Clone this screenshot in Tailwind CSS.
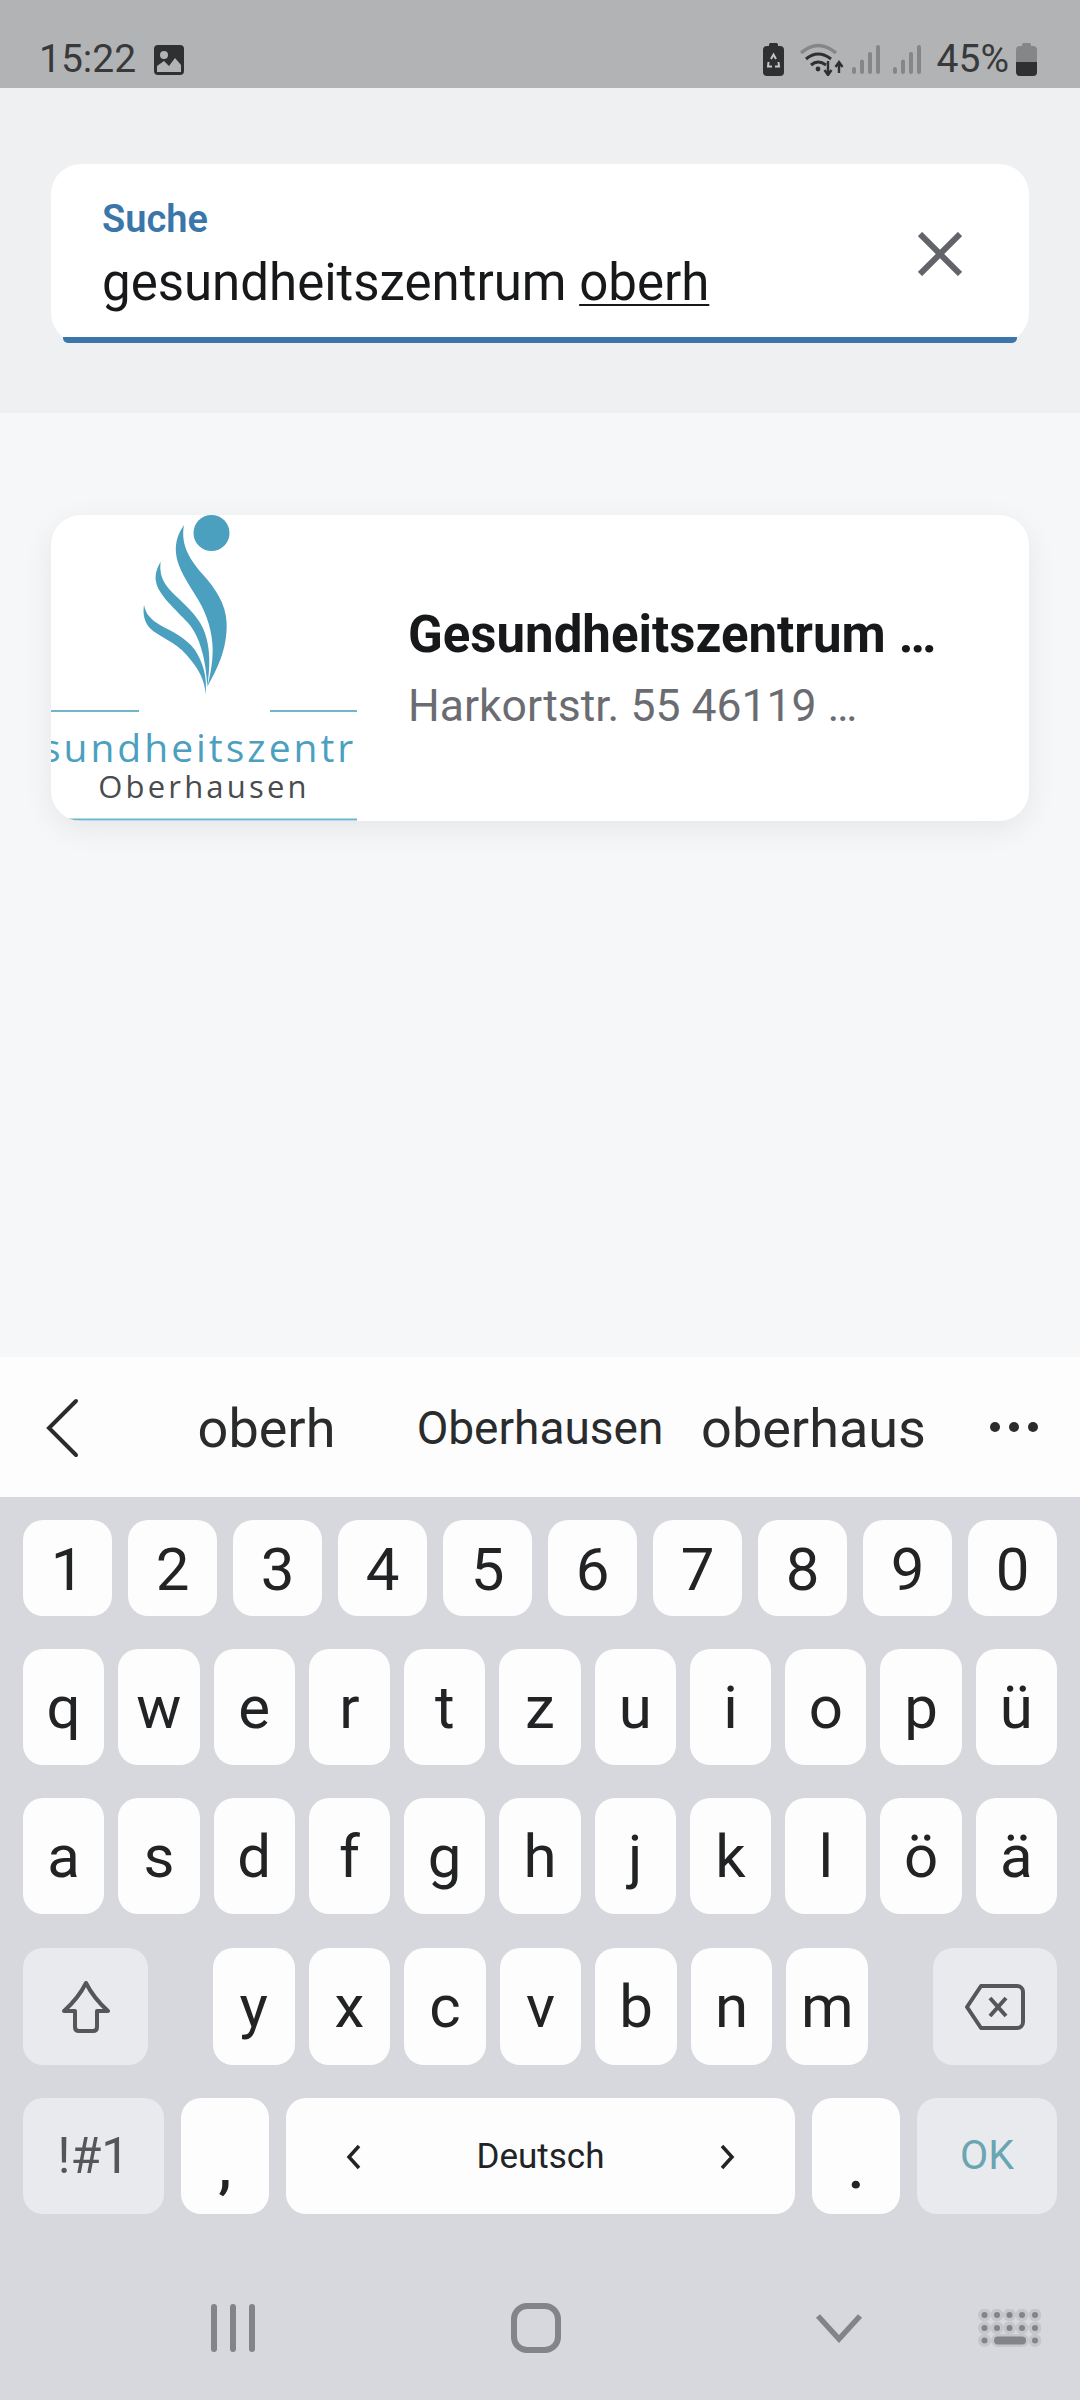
<!DOCTYPE html>
<html lang="de">
<head>
    <meta charset="UTF-8">
    <meta name="viewport" content="width=device-width, initial-scale=1.0">
    <title>Suche</title>
    <script src="https://cdn.jsdelivr.net/npm/@tailwindcss/browser@4"></script>
</head>
<body class="w-[1080px] h-[2400px] overflow-hidden flex flex-col bg-[#f6f7f9] font-['Roboto',sans-serif]">

<!-- Status bar -->
<div class="h-[88px] bg-[#b2b3b5] flex items-end pb-[8px] pl-[39px] text-[#38393b] text-[39px] leading-[42px]">
    <span>15:22</span>
    <svg class="ml-[18px] mb-[5px]" width="30" height="30" viewBox="0 0 30 30">
        <rect width="30" height="30" rx="4" fill="#2f3032"/>
        <circle cx="10" cy="10" r="4" fill="#b2b3b5"/>
        <path d="M3 27V21L10 16L15 21L21 13L27 20V27Z" fill="#b2b3b5"/>
    </svg>
    <div class="ml-auto flex items-end">
        <svg class="mb-[4px]" width="21" height="33" viewBox="0 0 21 33">
            <rect x="6" y="0" width="9" height="5" rx="1.5" fill="#2f3032"/>
            <rect x="0" y="3" width="21" height="30" rx="4" fill="#2f3032"/>
            <path d="M8 16L10.500 11.500L13 16M15.500 19L16 23.500H12M9 23.500H5L5.500 19" stroke="#c4c5c7" stroke-width="2" fill="none"/>
        </svg>
        <svg class="ml-[16px] mb-[4px]" width="44" height="33" viewBox="0 0 44 33">
            <path d="M1 10Q18 -5 36 10" stroke="#858688" stroke-width="3.5" fill="none"/>
            <path d="M6 16Q18 6 31 16" stroke="#2f3032" stroke-width="3" fill="none"/>
            <path d="M11 22Q18 16 26 22" stroke="#2f3032" stroke-width="3" fill="none"/>
            <circle cx="18" cy="26" r="2.4" fill="#2f3032"/>
            <path d="M28 18V31M24.500 27L28 32L31.500 27M39 30V20M35.500 24L39 19L42.500 24" stroke="#2f3032" stroke-width="2.400" fill="none"/>
        </svg>
        <svg class="ml-[8px] mb-[6px]" width="28" height="29" viewBox="0 0 28 29">
            <rect x="0" y="22" width="4" height="7" rx="2" fill="#858688"/>
            <rect x="8" y="14.500" width="4" height="14.500" rx="2" fill="#858688"/>
            <rect x="16" y="7" width="4" height="22" rx="2" fill="#858688"/>
            <rect x="24" y="0" width="4" height="29" rx="2" fill="#858688"/>
        </svg>
        <svg class="ml-[13px] mb-[6px]" width="28" height="29" viewBox="0 0 28 29">
            <rect x="0" y="22" width="4" height="7" rx="2" fill="#858688"/>
            <rect x="8" y="14.500" width="4" height="14.500" rx="2" fill="#858688"/>
            <rect x="16" y="7" width="4" height="22" rx="2" fill="#858688"/>
            <rect x="24" y="0" width="4" height="29" rx="2" fill="#858688"/>
        </svg>
        <span class="ml-[16px]">45%</span>
        <svg class="ml-[7px] mr-[43px] mb-[4px]" width="21" height="33" viewBox="0 0 21 33">
            <rect x="6" y="0" width="9" height="5" rx="1.5" fill="#858688"/>
            <rect x="0" y="3" width="21" height="30" rx="4" fill="#858688"/>
            <path d="M0 19H21V29A4 4 0 0 1 17 33H4A4 4 0 0 1 0 29Z" fill="#2f3032"/>
        </svg>
    </div>
</div>

<!-- Search header -->
<div class="h-[325px] bg-[#eef0f2] px-[51px] pt-[76px]">
    <div class="relative h-[179px] bg-white rounded-[30px] pl-[51px] pt-[35px]">
        <div class="text-[38px] leading-[40px] font-semibold text-[#3a76aa]">Suche</div>
        <div class="mt-[14px] text-[51px] leading-[60px] text-[#17181a]">gesundheitszentrum <span class="underline decoration-2 underline-offset-[4px]">oberh</span></div>
        <svg class="absolute right-[67px] top-[68px]" width="44" height="44" viewBox="0 0 44 44">
            <path d="M2 2L42 42M42 2L2 42" stroke="#636469" stroke-width="6" fill="none"/>
        </svg>
        <div class="absolute left-[12px] right-[12px] bottom-0 h-[6px] bg-[#3a76aa] rounded-b-[5px]"></div>
    </div>
</div>

<!-- Results -->
<div class="h-[944px] px-[51px] pt-[102px]">
    <div class="h-[306px] bg-white rounded-[30px] overflow-hidden shadow-[0_8px_30px_rgba(0,0,0,0.07)] flex items-center">
        <svg class="shrink-0" width="306" height="306" viewBox="0 0 306 306">
            <circle cx="160.500" cy="18" r="18" fill="#4ba0bf"/>
            <g transform="translate(69 -15) scale(0.3333)" fill="#4ba0bf">
                <path d="M192 75C175 100 165 125 168 160C172 205 205 250 235 300C262 345 278 400 278 450C278 490 270 530 262 560C290 510 322 450 320 370C318 310 285 265 250 225C215 185 180 140 192 75Z"/>
                <path d="M122 185C110 205 104 225 108 245C115 285 165 325 205 370C240 410 258 480 262 560C270 500 272 450 255 400C240 355 205 325 175 295C145 265 115 240 122 185Z"/>
                <path d="M72 315C68 340 72 365 90 385C115 410 165 425 200 465C235 505 255 540 257 585C262 530 250 490 225 450C195 410 155 395 120 375C95 360 78 345 72 315Z"/>
            </g>
            <path d="M0 196H88M219 196H306" stroke="#6fb6c9" stroke-width="2"/>
            <path d="M0 304.500H306" stroke="#6fb6c9" stroke-width="2"/>
            <text x="153" y="247" text-anchor="middle" font-family="Open Sans" font-size="39" font-weight="500" letter-spacing="3" fill="#4ba0bf">Gesundheitszentrum</text>
            <text x="153" y="283" text-anchor="middle" font-family="Open Sans" font-size="31" letter-spacing="3.200" fill="#4a4b4e">Oberhausen</text>
        </svg>
        <div class="pl-[51px] pt-[4px]">
            <div class="text-[51px] leading-[70px] font-bold text-[#17181a] whitespace-nowrap">Gesundheitszentrum …</div>
            <div class="mt-[1px] text-[44.5px] leading-[70px] text-[#6b6c72] whitespace-nowrap">Harkortstr. 55 46119 …</div>
        </div>
    </div>
</div>

<!-- Suggestions -->
<div class="h-[140px] bg-[#fdfdfd] flex items-center text-[#2a2b2d]">
    <svg class="ml-[45px] mt-[2px] shrink-0" width="34" height="60" viewBox="0 0 34 60">
        <path d="M31 3L4 30L31 57" stroke="#2a2b2d" stroke-width="4" stroke-linecap="round" fill="none"/>
    </svg>
    <div class="ml-[51px] w-[273px] text-center text-[54px] pt-[2px]">oberh</div>
    <div class="w-[274px] text-center text-[46px] pt-[2px]">Oberhausen</div>
    <div class="w-[273px] text-center text-[54px] pt-[2px]">oberhaus</div>
    <div class="ml-[40px] flex gap-[9px]">
        <div class="w-[10px] h-[10px] rounded-full bg-[#2a2b2d]"></div>
        <div class="w-[10px] h-[10px] rounded-full bg-[#2a2b2d]"></div>
        <div class="w-[10px] h-[10px] rounded-full bg-[#2a2b2d]"></div>
    </div>
</div>

<!-- Keyboard -->
<div class="flex-1 bg-[#d7d8dd] flex flex-col px-[23px] pt-[23px] text-[#222325] text-[60px]">
    <div class="h-[96px] flex gap-[16px]">
        <div class="flex-1 rounded-[20px] bg-[#fdfdfd] flex items-center justify-center pt-[4px]">1</div>
        <div class="flex-1 rounded-[20px] bg-[#fdfdfd] flex items-center justify-center pt-[4px]">2</div>
        <div class="flex-1 rounded-[20px] bg-[#fdfdfd] flex items-center justify-center pt-[4px]">3</div>
        <div class="flex-1 rounded-[20px] bg-[#fdfdfd] flex items-center justify-center pt-[4px]">4</div>
        <div class="flex-1 rounded-[20px] bg-[#fdfdfd] flex items-center justify-center pt-[4px]">5</div>
        <div class="flex-1 rounded-[20px] bg-[#fdfdfd] flex items-center justify-center pt-[4px]">6</div>
        <div class="flex-1 rounded-[20px] bg-[#fdfdfd] flex items-center justify-center pt-[4px]">7</div>
        <div class="flex-1 rounded-[20px] bg-[#fdfdfd] flex items-center justify-center pt-[4px]">8</div>
        <div class="flex-1 rounded-[20px] bg-[#fdfdfd] flex items-center justify-center pt-[4px]">9</div>
        <div class="flex-1 rounded-[20px] bg-[#fdfdfd] flex items-center justify-center pt-[4px]">0</div>
    </div>
    <div class="mt-[33px] h-[116px] flex gap-[14px]">
        <div class="flex-1 rounded-[20px] bg-[#fdfdfd] flex items-center justify-center pt-[2px]">q</div>
        <div class="flex-1 rounded-[20px] bg-[#fdfdfd] flex items-center justify-center pt-[2px]">w</div>
        <div class="flex-1 rounded-[20px] bg-[#fdfdfd] flex items-center justify-center pt-[2px]">e</div>
        <div class="flex-1 rounded-[20px] bg-[#fdfdfd] flex items-center justify-center pt-[2px]">r</div>
        <div class="flex-1 rounded-[20px] bg-[#fdfdfd] flex items-center justify-center pt-[2px]">t</div>
        <div class="flex-1 rounded-[20px] bg-[#fdfdfd] flex items-center justify-center pt-[2px]">z</div>
        <div class="flex-1 rounded-[20px] bg-[#fdfdfd] flex items-center justify-center pt-[2px]">u</div>
        <div class="flex-1 rounded-[20px] bg-[#fdfdfd] flex items-center justify-center pt-[2px]">i</div>
        <div class="flex-1 rounded-[20px] bg-[#fdfdfd] flex items-center justify-center pt-[2px]">o</div>
        <div class="flex-1 rounded-[20px] bg-[#fdfdfd] flex items-center justify-center pt-[2px]">p</div>
        <div class="flex-1 rounded-[20px] bg-[#fdfdfd] flex items-center justify-center pt-[2px]">ü</div>
    </div>
    <div class="mt-[33px] h-[116px] flex gap-[14px]">
        <div class="flex-1 rounded-[20px] bg-[#fdfdfd] flex items-center justify-center pt-[2px]">a</div>
        <div class="flex-1 rounded-[20px] bg-[#fdfdfd] flex items-center justify-center pt-[2px]">s</div>
        <div class="flex-1 rounded-[20px] bg-[#fdfdfd] flex items-center justify-center pt-[2px]">d</div>
        <div class="flex-1 rounded-[20px] bg-[#fdfdfd] flex items-center justify-center pt-[2px]">f</div>
        <div class="flex-1 rounded-[20px] bg-[#fdfdfd] flex items-center justify-center pt-[2px]">g</div>
        <div class="flex-1 rounded-[20px] bg-[#fdfdfd] flex items-center justify-center pt-[2px]">h</div>
        <div class="flex-1 rounded-[20px] bg-[#fdfdfd] flex items-center justify-center pt-[2px]">j</div>
        <div class="flex-1 rounded-[20px] bg-[#fdfdfd] flex items-center justify-center pt-[2px]">k</div>
        <div class="flex-1 rounded-[20px] bg-[#fdfdfd] flex items-center justify-center pt-[2px]">l</div>
        <div class="flex-1 rounded-[20px] bg-[#fdfdfd] flex items-center justify-center pt-[2px]">ö</div>
        <div class="flex-1 rounded-[20px] bg-[#fdfdfd] flex items-center justify-center pt-[2px]">ä</div>
    </div>
    <div class="mt-[34px] h-[117px] flex">
        <div class="w-[125px] rounded-[20px] bg-[#e9eaee] flex items-center justify-center">
            <svg width="50" height="52" viewBox="0 0 50 52">
                <path d="M25 2C30 12 38 22 47 30H36V46Q36 50 32 50H18Q14 50 14 46V30H3C12 22 20 12 25 2Z" stroke="#55565a" stroke-width="4" stroke-linejoin="round" fill="none"/>
            </svg>
        </div>
        <div class="ml-[65px] flex-1 flex gap-[14px]">
            <div class="flex-1 rounded-[20px] bg-[#fdfdfd] flex items-center justify-center">y</div>
            <div class="flex-1 rounded-[20px] bg-[#fdfdfd] flex items-center justify-center">x</div>
            <div class="flex-1 rounded-[20px] bg-[#fdfdfd] flex items-center justify-center">c</div>
            <div class="flex-1 rounded-[20px] bg-[#fdfdfd] flex items-center justify-center">v</div>
            <div class="flex-1 rounded-[20px] bg-[#fdfdfd] flex items-center justify-center">b</div>
            <div class="flex-1 rounded-[20px] bg-[#fdfdfd] flex items-center justify-center">n</div>
            <div class="flex-1 rounded-[20px] bg-[#fdfdfd] flex items-center justify-center">m</div>
        </div>
        <div class="ml-[65px] w-[124px] rounded-[20px] bg-[#e9eaee] flex items-center justify-center">
            <svg width="60" height="46" viewBox="0 0 60 46">
                <path d="M16 2H52A6 6 0 0 1 58 8V38A6 6 0 0 1 52 44H16L2 23Z" stroke="#55565a" stroke-width="4" stroke-linejoin="round" fill="none"/>
                <path d="M25 14L41 32M41 14L25 32" stroke="#55565a" stroke-width="4" fill="none"/>
            </svg>
        </div>
    </div>
    <div class="mt-[33px] h-[116px] flex gap-[17px]">
        <div class="w-[141px] rounded-[20px] bg-[#e9eaee] flex items-center justify-center text-[50px] text-[#55565a]">!#1</div>
        <div class="w-[88px] rounded-[20px] bg-[#fdfdfd] flex items-center justify-center pt-[22px] font-medium">,</div>
        <div class="flex-1 rounded-[20px] bg-[#fdfdfd] flex items-center justify-between px-[60px] pt-[2px] text-[35px]">
            <svg width="16" height="26" viewBox="0 0 16 26"><path d="M13 2L3 13L13 24" stroke="#222325" stroke-width="3.500" fill="none"/></svg>
            <span>Deutsch</span>
            <svg width="16" height="26" viewBox="0 0 16 26"><path d="M3 2L13 13L3 24" stroke="#222325" stroke-width="3.500" fill="none"/></svg>
        </div>
        <div class="w-[88px] rounded-[20px] bg-[#fdfdfd] flex items-center justify-center pt-[24px] font-medium">.</div>
        <div class="w-[140px] rounded-[20px] bg-[#e9eaee] flex items-center justify-center text-[41px] text-[#6aa6b2]">OK</div>
    </div>

    <!-- Navigation bar -->
    <div class="mt-[89px] -mx-[23px] h-[50px] flex items-center">
        <div class="ml-[211px] flex gap-[13px]">
            <div class="w-[6px] h-[48px] rounded-full bg-[#838487]"></div>
            <div class="w-[6px] h-[48px] rounded-full bg-[#838487]"></div>
            <div class="w-[6px] h-[48px] rounded-full bg-[#838487]"></div>
        </div>
        <div class="ml-[256px] w-[50px] h-[50px] rounded-[16px] border-[6px] border-[#838487]"></div>
        <svg class="ml-[254px]" width="48" height="30" viewBox="0 0 48 30">
            <path d="M3 3L24 26L45 3" stroke="#838487" stroke-width="5.500" fill="none"/>
        </svg>
        <svg class="ml-[115px]" width="63" height="38" viewBox="0 0 63 38">
            <g fill="#c5c6cb">
                <circle cx="6.500" cy="6" r="6.500"/><circle cx="19" cy="6" r="6.500"/><circle cx="31.500" cy="6" r="6.500"/><circle cx="44" cy="6" r="6.500"/><circle cx="57" cy="6" r="6.500"/>
                <circle cx="6.500" cy="19" r="6.500"/><circle cx="19" cy="19" r="6.500"/><circle cx="31.500" cy="19" r="6.500"/><circle cx="44" cy="19" r="6.500"/><circle cx="57" cy="19" r="6.500"/>
                <circle cx="6.500" cy="31.500" r="6.500"/><rect x="13" y="25" width="38" height="13" rx="6.500"/><circle cx="57" cy="31.500" r="6.500"/>
            </g>
            <g fill="#838487">
                <circle cx="6.500" cy="6" r="3"/><circle cx="19" cy="6" r="3"/><circle cx="31.500" cy="6" r="3"/><circle cx="44" cy="6" r="3"/><circle cx="57" cy="6" r="3"/>
                <circle cx="6.500" cy="19" r="3"/><circle cx="19" cy="19" r="3"/><circle cx="31.500" cy="19" r="3"/><circle cx="44" cy="19" r="3"/><circle cx="57" cy="19" r="3"/>
                <circle cx="6.500" cy="31.500" r="3"/><rect x="16" y="27.500" width="32" height="8" rx="4"/><circle cx="57" cy="31.500" r="3"/>
            </g>
        </svg>
    </div>
</div>

</body>
</html>
